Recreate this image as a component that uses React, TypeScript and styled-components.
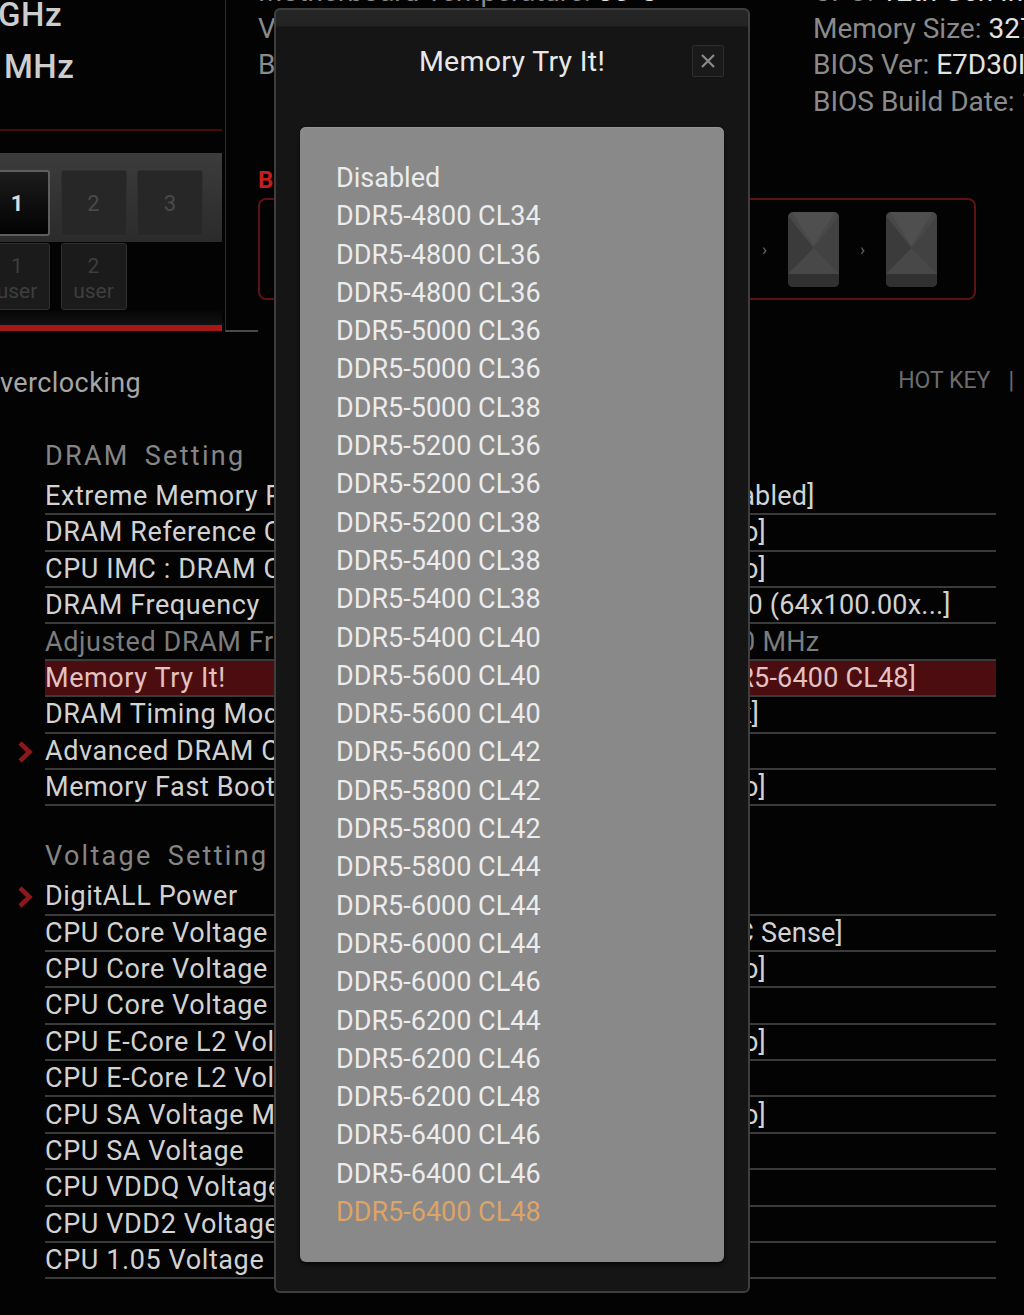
import React from 'react';
import styled, { createGlobalStyle } from 'styled-components';

const GlobalStyle = createGlobalStyle`
  html, body {
    margin: 0;
    padding: 0;
    background: #030303;
  }
  body {
    font-family: Roboto, 'Liberation Sans', sans-serif;
  }
`;

const Page = styled.div`
  position: relative;
  width: 1024px;
  height: 1315px;
  overflow: hidden;
  background: #030303;
  color: #d4d4d4;
  font-family: Roboto, 'Liberation Sans', sans-serif;
`;

const Header = styled.div`
  display: grid;
  grid-template-columns: 222px 36px 555px 211px;
  grid-template-rows: 140px 195px;
  height: 335px;
`;

const LeftCol = styled.div`
  grid-column: 1;
  grid-row: 1 / 3;
  display: flex;
  flex-direction: column;
`;

const Speed = styled.div<{ $indent: number }>`
  font-size: 33px;
  font-weight: 500;
  line-height: 52px;
  color: #cdcdcd;
  white-space: nowrap;
  margin-left: ${(p) => p.$indent}px;
  letter-spacing: 0.5px;
  &:first-child {
    margin-top: -11px;
  }
`;

const RedRule = styled.div`
  margin-top: 36px;
  height: 2px;
  background: #4b0b0b;
`;

const ProfileRow = styled.div<{ $panel?: boolean }>`
  display: flex;
  gap: 10.5px;
  margin-left: -26px;
  padding-left: 10px;
  margin-top: ${(p) => (p.$panel ? '22px' : '1px')};
  height: ${(p) => (p.$panel ? '89px' : '67px')};
  padding-top: ${(p) => (p.$panel ? '17px' : '0')};
  box-sizing: border-box;
  background: ${(p) => (p.$panel ? 'linear-gradient(#3c3c3c, #2b2b2b)' : 'transparent')};
`;

const ProfileButton = styled.div<{ $active?: boolean; $user?: boolean }>`
  width: 66px;
  height: ${(p) => (p.$user ? '67px' : '66px')};
  box-sizing: border-box;
  border-radius: 3px;
  display: flex;
  flex-direction: column;
  align-items: center;
  justify-content: center;
  padding-top: ${(p) => (p.$user ? '5px' : '0')};
  font-size: ${(p) => (p.$user ? '21px' : '22px')};
  line-height: 25px;
  font-weight: ${(p) => (p.$active ? 700 : 400)};
  color: ${(p) => (p.$active ? '#dcdcdc' : p.$user ? '#3e3e3e' : '#4a4a4a')};
  background: ${(p) =>
    p.$active ? 'linear-gradient(#1c1c1c, #020202)' : p.$user ? '#1b1b1b' : '#272727'};
  border: ${(p) => (p.$active ? '2px solid #5e5e5e' : '1px solid #2f2f2f')};
`;

const DarkBand = styled.div`
  height: 15px;
  background: linear-gradient(#050505, #121212);
`;

const RedBar = styled.div`
  height: 6px;
  background: #a61717;
`;

const Divider = styled.div`
  grid-column: 2;
  grid-row: 1 / 3;
  margin-left: 3px;
  height: 330px;
  border-left: 1px solid #2b2b2b;
  border-bottom: 2px solid #4a4a4a;
`;

const InfoCol = styled.div<{ $col: number }>`
  grid-column: ${(p) => p.$col};
  grid-row: 1;
  margin-top: -26px;
`;

const InfoLine = styled.div`
  font-size: 28px;
  line-height: 36.5px;
  color: #8a8a8a;
  white-space: nowrap;
`;

const InfoValue = styled.span`
  color: #e2e2e2;
`;

const BootArea = styled.div`
  grid-column: 3 / 5;
  grid-row: 2;
  padding-top: 26px;
`;

const BootTitle = styled.div`
  font-size: 24px;
  line-height: 28px;
  font-weight: 700;
  color: #c21e1e;
`;

const BootBox = styled.div`
  margin-top: 4px;
  width: 718px;
  height: 102px;
  box-sizing: border-box;
  border: 2px solid #5c1212;
  border-radius: 8px;
  display: flex;
  align-items: center;
  justify-content: flex-end;
  padding-right: 37px;
`;

const BootArrow = styled.div`
  width: 47px;
  text-align: center;
  font-size: 17px;
  color: #6a6a6a;
`;

const Main = styled.div`
  display: flex;
  flex-direction: column;
`;

const TopLine = styled.div`
  display: flex;
  justify-content: space-between;
  align-items: center;
  margin-top: 30px;
  height: 36px;
`;

const Crumb = styled.div`
  margin-left: -19px;
  font-size: 27px;
  letter-spacing: 0.4px;
  color: #a6a6a6;
  white-space: nowrap;
`;

const HotKey = styled.div`
  display: flex;
  align-items: center;
  gap: 18px;
  margin-right: 10px;
  margin-top: -6px;
  font-size: 23px;
  color: #6c6c6c;
`;

const SectionTitle = styled.div<{ $gap: number }>`
  margin-top: ${(p) => p.$gap}px;
  height: 36px;
  line-height: 36px;
  padding-left: 45px;
  font-size: 27px;
  letter-spacing: 2.3px;
  word-spacing: 6px;
  color: #858585;
`;

const List = styled.div`
  width: 996px;
  margin-top: 4.8px;
`;

const Row = styled.div`
  display: flex;
  height: 36.4px;
`;

const Marker = styled.div`
  width: 45px;
  display: flex;
  align-items: center;
  justify-content: center;
  padding-left: 4px;
  box-sizing: border-box;
`;

const RowBody = styled.div<{ $active?: boolean }>`
  flex: 1;
  display: flex;
  align-items: center;
  box-sizing: border-box;
  border-bottom: 2px solid #3a3a3a;
  background: ${(p) => (p.$active ? '#4c0d10' : 'transparent')};
`;

const Cell = styled.div<{ $tone: 'normal' | 'dim' | 'active'; $width?: number }>`
  width: ${(p) => (p.$width ? `${p.$width}px` : 'auto')};
  font-size: 27px;
  letter-spacing: ${(p) => (p.$width ? '0.6px' : '0.2px')};
  white-space: nowrap;
  overflow: hidden;
  color: ${(p) => (p.$tone === 'dim' ? '#7c7c7c' : p.$tone === 'active' ? '#e3c2c2' : '#d2d2d2')};
`;

const Modal = styled.div`
  position: absolute;
  left: 274px;
  top: 8px;
  width: 476px;
  height: 1285px;
  box-sizing: border-box;
  border: 2px solid #3e3e3e;
  border-radius: 6px;
  background: linear-gradient(#262626 0, #222222 16px, #151515 17px);
  padding: 0 24px;
  display: flex;
  flex-direction: column;
`;

const TitleBar = styled.div`
  height: 102px;
  display: grid;
  grid-template-columns: 1fr auto 1fr;
  align-items: center;
`;

const Title = styled.div`
  grid-column: 2;
  font-size: 28.5px;
  letter-spacing: 0.3px;
  color: #e8e8e8;
`;

const CloseButton = styled.div`
  grid-column: 3;
  justify-self: end;
  width: 32px;
  height: 32px;
  box-sizing: border-box;
  border: 1px solid #2e2e2e;
  border-radius: 2px;
  background: #1a1a1a;
  display: flex;
  align-items: center;
  justify-content: center;
`;

const OptionPanel = styled.div`
  margin-top: 15px;
  height: 1135px;
  box-sizing: border-box;
  border-radius: 6px;
  background: #898989;
  box-shadow: 0 3px 4px rgba(0, 0, 0, 0.6), inset 0 1px 0 #959595;
  padding: 32px 0 0 36px;
`;

const Option = styled.div<{ $selected?: boolean }>`
  font-size: 27px;
  line-height: 38.3px;
  color: ${(p) => (p.$selected ? '#dca466' : '#ececec')};
`;

type Tone = 'normal' | 'dim' | 'active';
interface Setting {
  label: string;
  value?: string;
  tone?: Tone;
  sub?: boolean;
}

const dramRows: Setting[] = [
  { label: 'Extreme Memory Profile(XMP)', value: '[Disabled]' },
  { label: 'DRAM Reference Clock', value: '[Auto]' },
  { label: 'CPU IMC : DRAM Clock', value: '[Auto]' },
  { label: 'DRAM Frequency', value: '[6400 (64x100.00x...]' },
  { label: 'Adjusted DRAM Frequency', value: '6400 MHz', tone: 'dim' },
  { label: 'Memory Try It!', value: '[DDR5-6400 CL48]', tone: 'active' },
  { label: 'DRAM Timing Mode', value: '[Link]' },
  { label: 'Advanced DRAM Configuration', sub: true },
  { label: 'Memory Fast Boot', value: '[Auto]' },
];

const voltageRows: Setting[] = [
  { label: 'DigitALL Power', sub: true },
  { label: 'CPU Core Voltage Monitor', value: '[VCC Sense]' },
  { label: 'CPU Core Voltage Mode', value: '[Auto]' },
  { label: 'CPU Core Voltage' },
  { label: 'CPU E-Core L2 Voltage Mode', value: '[Auto]' },
  { label: 'CPU E-Core L2 Voltage' },
  { label: 'CPU SA Voltage Mode', value: '[Auto]' },
  { label: 'CPU SA Voltage' },
  { label: 'CPU VDDQ Voltage' },
  { label: 'CPU VDD2 Voltage' },
  { label: 'CPU 1.05 Voltage' },
];

const options = [
  'Disabled',
  'DDR5-4800 CL34',
  'DDR5-4800 CL36',
  'DDR5-4800 CL36',
  'DDR5-5000 CL36',
  'DDR5-5000 CL36',
  'DDR5-5000 CL38',
  'DDR5-5200 CL36',
  'DDR5-5200 CL36',
  'DDR5-5200 CL38',
  'DDR5-5400 CL38',
  'DDR5-5400 CL38',
  'DDR5-5400 CL40',
  'DDR5-5600 CL40',
  'DDR5-5600 CL40',
  'DDR5-5600 CL42',
  'DDR5-5800 CL42',
  'DDR5-5800 CL42',
  'DDR5-5800 CL44',
  'DDR5-6000 CL44',
  'DDR5-6000 CL44',
  'DDR5-6000 CL46',
  'DDR5-6200 CL44',
  'DDR5-6200 CL46',
  'DDR5-6200 CL48',
  'DDR5-6400 CL46',
  'DDR5-6400 CL46',
  'DDR5-6400 CL48',
];

const SubArrow = () => (
  <svg width="16" height="24" viewBox="0 0 16 24">
    <path d="M3 3 L12.5 12 L3 21" fill="none" stroke="#8e1717" strokeWidth="4.5" strokeLinejoin="miter" />
  </svg>
);

const BootDevice = () => (
  <svg width="51" height="75" viewBox="0 0 51 75">
    <rect x="0" y="0" width="51" height="75" rx="5" fill="#484848" />
    <path d="M0 4 L25.5 36 L0 62 Z" fill="#3b3b3b" />
    <path d="M51 4 L25.5 36 L51 62 Z" fill="#424242" />
    <path d="M4 0 L25.5 34 L47 0 Z" fill="#4f4f4f" />
    <path d="M0 62 H51 V70 A5 5 0 0 1 46 75 H5 A5 5 0 0 1 0 70 Z" fill="#313131" />
  </svg>
);

const CloseIcon = () => (
  <svg width="16" height="16" viewBox="0 0 16 16">
    <path d="M2 2 L14 14 M14 2 L2 14" stroke="#8a8a8a" strokeWidth="2.2" />
  </svg>
);

const SettingRow = ({ label, value, tone = 'normal', sub }: Setting) => (
  <Row>
    <Marker>{sub && <SubArrow />}</Marker>
    <RowBody $active={tone === 'active'}>
      <Cell $tone={tone} $width={649}>{label}</Cell>
      {value && <Cell $tone={tone}>{value}</Cell>}
    </RowBody>
  </Row>
);

export default function App() {
  return (
    <Page>
      <GlobalStyle />
      <Header>
        <LeftCol>
          <Speed $indent={-2}>GHz</Speed>
          <Speed $indent={4}>MHz</Speed>
          <RedRule />
          <ProfileRow $panel>
            <ProfileButton $active>1</ProfileButton>
            <ProfileButton>2</ProfileButton>
            <ProfileButton>3</ProfileButton>
          </ProfileRow>
          <ProfileRow>
            <ProfileButton $user>
              <span>1</span>
              <span>user</span>
            </ProfileButton>
            <ProfileButton $user>
              <span>2</span>
              <span>user</span>
            </ProfileButton>
          </ProfileRow>
          <DarkBand />
          <RedBar />
        </LeftCol>
        <Divider />
        <InfoCol $col={3}>
          <InfoLine>Motherboard Temperature: <InfoValue>35°C</InfoValue></InfoLine>
          <InfoLine>VCore: <InfoValue>1.204V</InfoValue></InfoLine>
          <InfoLine>BIOS Mode: <InfoValue>CSM/UEFI</InfoValue></InfoLine>
        </InfoCol>
        <InfoCol $col={4}>
          <InfoLine>CPU: <InfoValue>12th Gen Intel(R) Core(TM)</InfoValue></InfoLine>
          <InfoLine>Memory Size: <InfoValue>32768MB</InfoValue></InfoLine>
          <InfoLine>BIOS Ver: <InfoValue>E7D30IMS.100</InfoValue></InfoLine>
          <InfoLine>BIOS Build Date: <InfoValue>10/13/2021</InfoValue></InfoLine>
        </InfoCol>
        <BootArea>
          <BootTitle>Boot Priority</BootTitle>
          <BootBox>
            <BootArrow>›</BootArrow>
            <BootDevice />
            <BootArrow>›</BootArrow>
            <BootDevice />
          </BootBox>
        </BootArea>
      </Header>

      <Main>
        <TopLine>
          <Crumb>Overclocking</Crumb>
          <HotKey>
            <span>HOT KEY</span>
            <span>|</span>
          </HotKey>
        </TopLine>

        <SectionTitle $gap={37}>DRAM Setting</SectionTitle>
        <List>
          {dramRows.map((r, i) => (
            <SettingRow key={i} {...r} />
          ))}
        </List>

        <SectionTitle $gap={32}>Voltage Setting</SectionTitle>
        <List>
          {voltageRows.map((r, i) => (
            <SettingRow key={i} {...r} />
          ))}
        </List>
      </Main>

      <Modal>
        <TitleBar>
          <Title>Memory Try It!</Title>
          <CloseButton>
            <CloseIcon />
          </CloseButton>
        </TitleBar>
        <OptionPanel>
          {options.map((o, i) => (
            <Option key={i} $selected={i === options.length - 1}>
              {o}
            </Option>
          ))}
        </OptionPanel>
      </Modal>
    </Page>
  );
}
